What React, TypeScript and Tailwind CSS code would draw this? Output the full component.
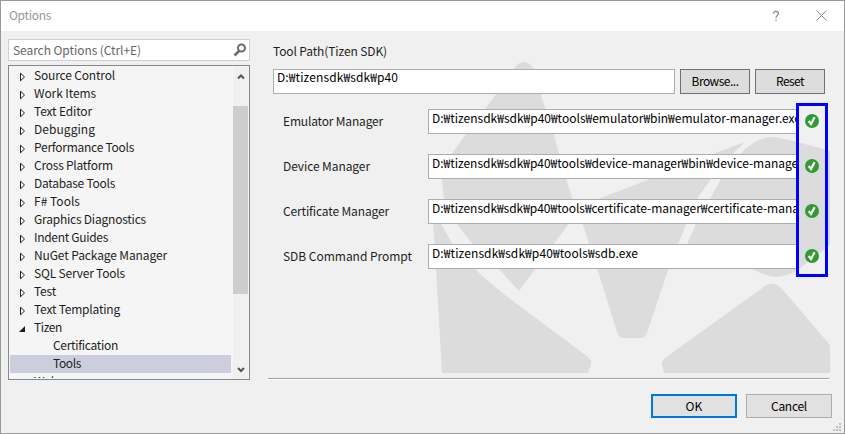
import { useLayoutEffect, useRef, useState } from "react";

/** Text whose tracking is adjusted so that the line has the requested width. */
function Label({ text, width, className = "" }: { text: string; width: number; className?: string }) {
  const ref = useRef<HTMLSpanElement>(null);
  const [spacing, setSpacing] = useState(0);
  useLayoutEffect(() => {
    if (ref.current) {
      setSpacing((width - ref.current.getBoundingClientRect().width) / text.length);
    }
  }, [text, width]);
  return (
    <span className={`inline-block whitespace-pre ${className}`} ref={ref} style={{ letterSpacing: spacing }}>
      {text}
    </span>
  );
}

type Node = { text: string; width: number; kind?: "open" | "leaf"; selected?: boolean };

const nodes: Node[] = [
  { text: "Source Control", width: 81 },
  { text: "Work Items", width: 62 },
  { text: "Text Editor", width: 58 },
  { text: "Debugging", width: 61 },
  { text: "Performance Tools", width: 100 },
  { text: "Cross Platform", width: 79 },
  { text: "Database Tools", width: 81 },
  { text: "F# Tools", width: 46 },
  { text: "Graphics Diagnostics", width: 112 },
  { text: "Indent Guides", width: 74 },
  { text: "NuGet Package Manager", width: 133 },
  { text: "SQL Server Tools", width: 91 },
  { text: "Test", width: 22 },
  { text: "Text Templating", width: 86 },
  { text: "Tizen", width: 28, kind: "open" },
  { text: "Certification", width: 65, kind: "leaf" },
  { text: "Tools", width: 28, kind: "leaf", selected: true },
  { text: "Web", width: 24 },
];

const tools = [
  { name: "Emulator Manager", nameWidth: 100, path: "D:₩tizensdk₩sdk₩p40₩tools₩emulator₩bin₩emulator-manager.exe", width: 369 },
  { name: "Device Manager", nameWidth: 87, path: "D:₩tizensdk₩sdk₩p40₩tools₩device-manager₩bin₩device-manager.exe", width: 392 },
  { name: "Certificate Manager", nameWidth: 106, path: "D:₩tizensdk₩sdk₩p40₩tools₩certificate-manager₩certificate-manager.exe", width: 406 },
  { name: "SDB Command Prompt", nameWidth: 129, path: "D:₩tizensdk₩sdk₩p40₩tools₩sdb.exe", width: 206 },
];

function Tree() {
  return (
    <div className="flex h-[315px] border border-[#828790] bg-[#f5f5f5] p-px">
      <div className="h-[311px] w-[221px] overflow-hidden">
        {nodes.map((n) => (
          <div
            key={n.text}
            className={`flex h-[18px] items-center ${n.kind === "leaf" ? "pl-[43px]" : "pl-[9px]"} ${n.selected ? "bg-[#cccedb]" : ""}`}
          >
            {n.kind !== "leaf" && (
              <svg className="mr-[7px] mt-px h-[10px] w-2 shrink-0" viewBox="0 0 8 10">
                {n.kind === "open" ? (
                  <path d="M6 2v6H0z" fill="#1e1e1e" />
                ) : (
                  <path d="M1.500 1.200v7.600L5.500 5z" fill="#fff" stroke="#1e1e1e" />
                )}
              </svg>
            )}
            <Label text={n.text} width={n.width} className="pb-[2px] leading-4" />
          </div>
        ))}
      </div>
      <div className="ml-[2px] flex h-[311px] w-[15px] flex-col items-center bg-[#f0f0f0]">
        <svg className="mt-1 h-[10px] w-[10px]" viewBox="0 0 10 10">
          <path d="M2 7.500 5 4.500l3 3" fill="none" stroke="#555" strokeWidth="2" />
        </svg>
        <div className="mt-[25px] h-[188px] w-full bg-[#cdcdcd]" />
        <svg className="mt-[71px] h-[10px] w-[10px]" viewBox="0 0 10 10">
          <path d="M2 3l3 3 3-3" fill="none" stroke="#555" strokeWidth="2" />
        </svg>
      </div>
    </div>
  );
}

function Watermark() {
  return (
    <svg className="absolute left-[427px] top-[54px] h-[318px] w-[402px]" viewBox="428 55 402 318">
      <g fill="#dcdcdc">
        <path d="M524 62Q519 62 515 67L497 93 466 134 453 152Q442 166 442 180L444 198Q447 210 458 225 475 250 498 268L519 291 570 222 580 204 575 208 566 178 553 132 540 92 534 70Q530 62 524 62Z" />
        <path d="M433 220 440 222 452 243 474 268Q485 279 505 295L588 357Q592 360 591 364L588 373H442L437 285Z" />
        <path d="M745 142 715 153 653 178 598 199 575 208 582 222 597 268 617 332Q619 338 624 338H640Q645 338 647 333L668 270 687 222 697 199 711 179Q725 160 745 142Z" />
        <path d="M740 154Q757 137 773 137 785 138 830 151V245L800 268Q790 276 777 277 768 277 752 269L684 251 696 224 710 199 721 179Z" />
        <path d="M765 286Q774 280 783 290L830 345V373H664L662 365Q661 361 665 358Z" />
      </g>
    </svg>
  );
}

function Check() {
  return (
    <svg className="h-4 w-4" viewBox="0 0 16 16">
      <circle cx="8" cy="8" r="7" fill="#339933" />
      <path d="M4.700 8 7 11l3.600-6.800" fill="none" stroke="#fff" strokeWidth="2.200" />
    </svg>
  );
}

export default function App() {
  return (
    <div className="relative flex h-[434px] w-[845px] flex-col overflow-hidden border border-[#999] bg-[#f0f0f0] font-['Noto_Sans_CJK_KR','Open_Sans',sans-serif] text-[12px] text-[#1e1e1e]">
      <Watermark />
      <header className="flex h-[30px] shrink-0 items-center bg-white pl-2 text-[#999]">
        <Label text="Options" width={42} className="pb-[2px]" />
        <svg className="ml-auto h-[12px] w-[8px]" viewBox="0 0 8 12">
          <path d="M1.500 3.500V2.800C2 .8 6.500.8 6.500 3.300 6.500 5.300 4 5 4 8M4 9.500V11" fill="none" stroke="#888" strokeWidth="1.200" />
        </svg>
        <svg className="mb-[2px] ml-9 mr-[17px] h-[11px] w-[11px]" viewBox="0 0 11 11">
          <path d="M.5.5l10 10M10.500.5l-10 10" stroke="#888" />
        </svg>
      </header>

      <div className="relative flex h-[350px] shrink-0">
        <aside className="ml-[7px] mt-2 w-[242px]">
          <div className="mb-1 flex h-[22px] items-center justify-between border border-[#ccced9] bg-white pl-1 pr-[2px] text-[#666]">
            <Label text="Search Options (Ctrl+E)" width={128} />
            <svg className="h-[14px] w-[14px]" viewBox="0 0 14 14" fill="none" stroke="#6a6a6a">
              <circle cx="8.500" cy="5" r="3.500" strokeWidth="2" />
              <path d="M6 8 1.500 12.500" strokeWidth="2.500" />
            </svg>
          </div>
          <Tree />
        </aside>

        <main className="ml-[18px] mt-3 w-[564px]">
          <div className="h-[26px] pl-[5px] leading-4">
            <Label text="Tool Path(Tizen SDK)" width={114} />
          </div>
          <div className="flex h-[25px] gap-[5px] pl-[5px]">
            <div className="w-[402px] border border-[#abadb3] bg-white pl-[3px] leading-[14px] text-black">
              <Label text="D:₩tizensdk₩sdk₩p40" width={121} />
            </div>
            <div className="flex w-[70px] items-center justify-center border border-[#707070] bg-[#ddd] text-black">
              <Label text="Browse..." width={47} className="pb-px" />
            </div>
            <div className="flex w-[70px] items-center justify-center border border-[#707070] bg-[#ddd] text-black">
              <Label text="Reset" width={28} className="pb-px" />
            </div>
          </div>
          <div className="mt-[15px] flex flex-col gap-5">
            {tools.map((t) => (
              <div key={t.name} className="flex h-[25px] items-center">
                <div className="w-[160px] pb-[2px] pl-[15px]">
                  <Label text={t.name} width={t.nameWidth} className="align-middle" />
                </div>
                <div className="h-[25px] w-[371px] overflow-hidden border border-r-0 border-[#abadb3] bg-white pl-[3px] leading-[15px] text-black">
                  <Label text={t.path} width={t.width} />
                </div>
                <div className="mb-px ml-[5px]">
                  <Check />
                </div>
              </div>
            ))}
          </div>
          <div className="mt-[109px] h-[2px] w-[561px] border-b border-t border-b-white border-t-[#a0a0a0]" />
        </main>
      </div>

      <footer className="relative mt-[13px] flex h-6 shrink-0 justify-end gap-[9px] pr-3 text-black">
        <div className="flex w-[86px] items-center justify-center border-2 border-[#0078d7] bg-[#e1e1e1]">
          <Label text="OK" width={17} className="pb-px" />
        </div>
        <div className="flex w-[86px] items-center justify-center border border-[#adadad] bg-[#e1e1e1]">
          <Label text="Cancel" width={36} className="pb-px" />
        </div>
      </footer>

      <svg className="absolute bottom-[2px] right-[3px] h-2 w-2" viewBox="0 0 8 8" fill="#bfbfbf">
        <path d="M6 0h2v2H6zM3 3h2v2H3zM6 3h2v2H6zM0 6h2v2H0zM3 6h2v2H3zM6 6h2v2H6z" />
      </svg>
      <div className="absolute left-[795px] top-[102px] h-[174px] w-8 border-[3px] border-[#0000ff]" />
    </div>
  );
}
